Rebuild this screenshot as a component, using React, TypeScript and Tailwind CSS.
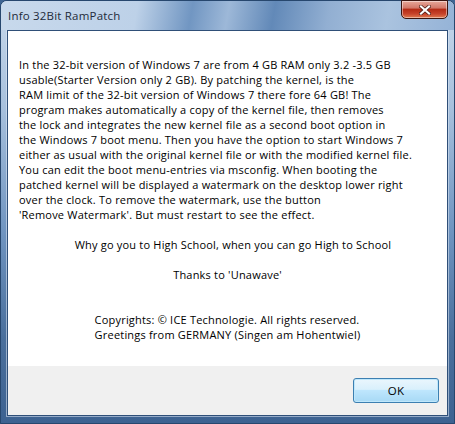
import React from "react";

const bodyLines = [
  "In the 32-bit version of Windows 7 are from 4 GB RAM only 3.2 -3.5 GB",
  "usable(Starter Version only 2 GB). By patching the kernel, is the",
  "RAM limit of the 32-bit version of Windows 7 there fore 64 GB! The",
  "program makes automatically a copy of the kernel file, then removes",
  "the lock and integrates the new kernel file as a second boot option in",
  "the Windows 7 boot menu. Then you have the option to start Windows 7",
  "either as usual with the original kernel file or with the modified kernel file.",
  "You can edit the boot menu-entries via msconfig. When booting the",
  "patched kernel will be displayed a watermark on the desktop lower right",
  "over the clock. To remove the watermark, use the button",
  "'Remove Watermark'. But must restart to see the effect.",
];

const App: React.FC = () => {
  return (
    <div className="w-[455px] h-[424px] bg-[#3f6593]">
      <div
        className="relative flex flex-col w-[455px] h-[424px] rounded-t-[7px] border border-[#27476e] bg-[linear-gradient(180deg,#c7d8eb_0%,#a8c1dd_25%,#6f94c0_55%,#4a6f9c_80%,#3d6291_100%)] text-[11px] tracking-[0.2px] text-black"
        style={{ fontFamily: '"Open Sans", "Noto Sans", sans-serif' }}
      >
        {/* Title bar */}
        <div className="relative h-[29px] flex items-center px-[7px] rounded-t-[6px] bg-[linear-gradient(100deg,#c8d9ec_0%,#bdd1e8_30%,#7196c2_42%,#9db8d8_50%,#6289b8_60%,#92afd2_72%,#aac3df_85%,#95b3d7_100%)]">
          <span className="text-[11.5px] text-[#1e2b3a] tracking-[0.2px]">Info 32Bit RamPatch</span>
          {/* Close button */}
          <div className="absolute top-[-1px] right-[6px] w-[47px] h-[19px] rounded-b-[5px] border border-[#3a1510] bg-[linear-gradient(180deg,#e7a89a_0%,#d3796a_40%,#b52c16_50%,#c6422a_75%,#e07a50_100%)] shadow-[inset_0_0_0_1px_rgba(255,255,255,0.45)] flex items-center justify-center">
            <svg width="12" height="10" viewBox="0 0 12 10">
              <path
                d="M2 1.5 L10 8.5 M10 1.5 L2 8.5"
                stroke="#4a1a12"
                strokeWidth="3.6"
                strokeLinecap="square"
              />
              <path
                d="M2 1.5 L10 8.5 M10 1.5 L2 8.5"
                stroke="#ffffff"
                strokeWidth="2.2"
                strokeLinecap="square"
              />
            </svg>
          </div>
        </div>

        {/* Client area */}
        <div className="flex-1 flex flex-col mx-[6px] mb-[7px] border border-[#2f4f78] shadow-[0_0_0_1px_rgba(220,232,245,0.55)]">
          <div className="flex-1 bg-white pt-[26px] pl-[11px] leading-[15px]">
            {bodyLines.map((line) => (
              <div key={line} className="whitespace-nowrap">
                {line}
              </div>
            ))}
            <div className="h-[15px]" />
            <div className="text-center whitespace-nowrap">
              Why go you to High School, when you can go High to School
            </div>
            <div className="h-[15px]" />
            <div className="text-center whitespace-nowrap pr-[11px]">Thanks to 'Unawave'</div>
            <div className="h-[30px]" />
            <div className="flex justify-center pr-[11px]">
              <div>
                <div className="whitespace-nowrap">
                  Copyrights: © ICE Technologie. All rights reserved.
                </div>
                <div className="whitespace-nowrap">
                  Greetings from GERMANY (Singen am Hohentwiel)
                </div>
              </div>
            </div>
          </div>
          <div className="h-[49px] bg-[#f0f0f0] flex items-start justify-end pt-[12px] pr-[8px]">
            <button className="w-[86px] h-[25px] rounded-[3px] border border-[#3c7fb1] bg-[linear-gradient(180deg,#eaf6fd_0%,#d9f0fc_45%,#bee6fd_50%,#a7d9f5_100%)] shadow-[inset_0_0_0_1px_#bfe7fb] text-[11.5px] text-black">
              OK
            </button>
          </div>
        </div>
      </div>
    </div>
  );
};

export default App;
